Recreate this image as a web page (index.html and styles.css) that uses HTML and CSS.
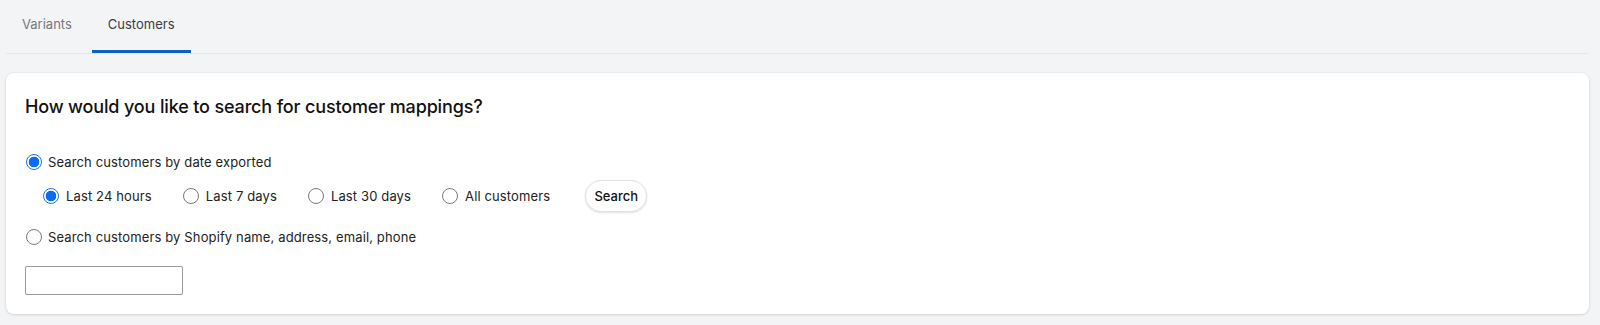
FILE: index.html
```html
<!DOCTYPE html>
<html lang="en">
<head>
<meta charset="utf-8">
<title>Customers</title>
<link rel="stylesheet" href="styles.css">
</head>
<body>
<nav class="tabs">
  <div class="tab">Variants</div>
  <div class="tab active">Customers</div>
</nav>
<section class="card">
  <h2 class="title">How would you like to search for customer mappings?</h2>
  <label class="row row-main">
    <span class="radio checked"></span>
    <span class="label">Search customers by date exported</span>
  </label>
  <div class="row row-sub">
    <label class="opt"><span class="radio checked"></span><span class="label">Last 24 hours</span></label>
    <label class="opt"><span class="radio"></span><span class="label">Last 7 days</span></label>
    <label class="opt"><span class="radio"></span><span class="label">Last 30 days</span></label>
    <label class="opt"><span class="radio"></span><span class="label">All customers</span></label>
    <button class="btn" type="button">Search</button>
  </div>
  <label class="row row-main row-third">
    <span class="radio"></span>
    <span class="label">Search customers by Shopify name, address, email, phone</span>
  </label>
  <input class="text-input" type="text">
</section>
</body>
</html>
```

FILE: styles.css
```css
* { box-sizing: border-box; }
html, body { margin: 0; padding: 0; }
body {
  background: #f3f4f6;
  font-family: Inter, "Noto Sans", "Liberation Sans", sans-serif;
  color: #1f1f1f;
  width: 1600px;
  height: 325px;
  overflow: hidden;
}
.tabs {
  display: flex;
  gap: 4px;
  margin: 0 11px 0 6px;
  border-bottom: 1px solid #e6e7ea;
  height: 54px;
}
.tab {
  height: 53px;
  padding: 16px 16px 0;
  font-size: 13px;
  line-height: 17px;
  color: #757880;
  border-bottom: 3px solid transparent;
}
.tab.active {
  color: #3b3d42;
  border-bottom-color: #0d62c0;
}
.card {
  margin: 19px 11px 0 6px;
  height: 241px;
  background: #fff;
  border-radius: 8px;
  box-shadow: 0 1px 3px rgba(0,0,0,0.12), 0 0 0 1px rgba(0,0,0,0.02);
  padding: 20px 19px 19px;
  display: flex;
  flex-direction: column;
  align-items: flex-start;
}
.title {
  margin: 0;
  font-size: 18px;
  line-height: 27px;
  font-weight: 500;
  color: #111;
  letter-spacing: -0.15px;
}
.row {
  display: flex;
  align-items: center;
}
.row-main {
  margin-top: 32px;
  height: 20px;
  padding-left: 1px;
}
.row-third { margin-top: 15px; }
.row-sub {
  margin-top: 8px;
  height: 32px;
  padding-left: 18px;
  gap: 31px;
}
.opt {
  display: flex;
  align-items: center;
}
.label {
  font-size: 13px;
  line-height: 18px;
  color: #222;
  margin-left: 7px;
  letter-spacing: 0.13px;
}
.row-main .label { margin-left: 6px; }
.radio {
  width: 16px;
  height: 16px;
  border-radius: 50%;
  border: 1px solid #7a7a7a;
  background: #fff;
  flex: none;
}
.radio.checked {
  border: 1px solid #1a73e8;
  background: radial-gradient(circle, #0a6cf5 0 5px, #fff 5.6px);
}
.btn {
  margin-left: 4px;
  height: 32px;
  width: 62px;
  border-radius: 16px;
  border: 1px solid #e3e3e3;
  background: #fff;
  box-shadow: 0 1px 2px rgba(0,0,0,0.12);
  font-family: inherit;
  font-size: 13px;
  font-weight: 500;
  color: #111;
  padding: 0;
}
.text-input {
  margin-top: 19px;
  width: 158px;
  height: 29px;
  border: 1px solid #9a9a9a;
  border-radius: 2px;
  background: #fff;
}
```
